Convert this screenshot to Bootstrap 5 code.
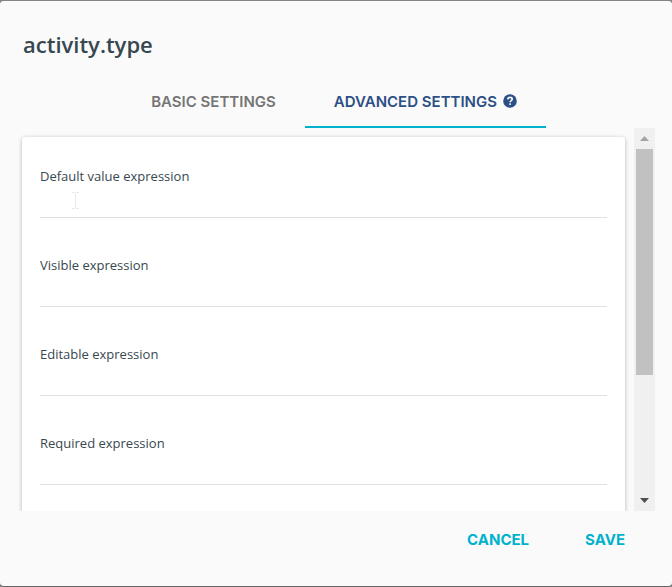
<!DOCTYPE html>
<html lang="en">
<head>
<meta charset="utf-8">
<meta name="viewport" content="width=device-width, initial-scale=1">
<title>activity.type</title>
<link href="https://cdn.jsdelivr.net/npm/bootstrap@5.3.0/dist/css/bootstrap.min.css" rel="stylesheet">
<style>
body { font-family: "Open Sans", "Liberation Sans", sans-serif; background: #858585; color: #37474f; }
.dialog-box { background: #fafafa; border: solid; border-width: 1px 0; border-color: #858585 transparent #666; border-radius: 4px; }
.dialog-title { font-size: 22px; line-height: 32px; font-weight: 600; padding: 27px 23px 0; }
.settings-tabs { padding: 15px 4px 0 0; }
.settings-tabs .nav-link { font-family: Inter, sans-serif; font-size: 15px; line-height: 24px; font-weight: 600; color: #757575; padding: 15px 29px 12px; border: 0; border-bottom: 2px solid transparent; border-radius: 0; background: none; }
.settings-tabs .nav-link.active { color: #2c4f85; border-color: #00b2cc; background: none; }
.help-icon { width: 14px; height: 14px; margin: -4px 0 0 2px; }
.scroll-area { min-height: 0; padding: 0 17px 0 22px; gap: 5px; }
.form-view { padding: 9px 4px 0; overflow: hidden; margin-left: -4px; }
.settings-card { border: 0; border-radius: 3px; box-shadow: 0 1px 4px rgba(0,0,0,.28); padding: 29px 18px; gap: 37px; }
.field-label { font-size: 13px; line-height: 20px; }
.line-input { height: 32px; border: 0; border-bottom: 1px solid #e0e0e0; border-radius: 0; padding: 0; background: transparent; box-shadow: none; }
.text-cursor { position: absolute; left: 32px; top: 26px; width: 7px; height: 17px; }
.scroll-track { width: 21px; background: #f0f0f0; padding: 0 2px; }
.scroll-track button { border: 0; padding: 0; background: none; height: 21px; line-height: 0; }
.scroll-track svg { width: 9px; height: 5px; }
.scroll-thumb { background: #c1c1c1; flex: 0 1 59%; }
.dialog-actions { padding: 10px 32px 27px; gap: 26px; }
.dialog-actions .btn { font-family: Inter, sans-serif; font-size: 15px; line-height: 24px; font-weight: 700; color: #00b2cc; padding: 7px 15px; border: 0; }
</style>
</head>
<body>
<div class="vh-100 d-flex flex-column">
<main class="dialog-box flex-fill d-flex flex-column overflow-hidden" role="dialog" aria-labelledby="title">
  <h1 class="dialog-title m-0" id="title">activity.type</h1>
  <div class="settings-tabs nav justify-content-center flex-nowrap" role="tablist">
    <button class="nav-link" type="button" role="tab">BASIC SETTINGS</button>
    <button class="nav-link active" type="button" role="tab" aria-selected="true">ADVANCED SETTINGS
      <svg class="help-icon" viewBox="0 0 14 14" aria-hidden="true"><circle cx="7" cy="7" r="6.8" fill="#2c4f85"/><path d="M4.8 5.3C5 3.9 5.8 3.4 7 3.4c1.300 0 2.200.8 2.200 1.800C9.200 6.600 7.100 6.700 7.100 8.300" fill="none" stroke="#fafafa" stroke-width="1.700"/><rect x="6.100" y="9.300" width="1.900" height="1.800" rx=".8" fill="#fafafa"/></svg>
    </button>
  </div>
  <div class="scroll-area d-flex flex-fill">
    <div class="form-view flex-fill">
      <form class="settings-card card">
        <div class="position-relative">
          <label class="field-label d-block" for="f1">Default value expression</label>
          <input class="line-input form-control" id="f1" type="text">
          <svg class="text-cursor" viewBox="0 0 7 17" aria-hidden="true"><path d="M0 .5h3M4 .5h3M3.500 1v15M0 16.500h3M4 16.500h3" stroke="#e9e9e9" fill="none"/></svg>
        </div>
        <div><label class="field-label d-block" for="f2">Visible expression</label><input class="line-input form-control" id="f2" type="text"></div>
        <div><label class="field-label d-block" for="f3">Editable expression</label><input class="line-input form-control" id="f3" type="text"></div>
        <div><label class="field-label d-block" for="f4">Required expression</label><input class="line-input form-control" id="f4" type="text"></div>
      </form>
    </div>
    <div class="scroll-track d-flex flex-column flex-shrink-0">
      <button type="button" aria-label="Scroll up"><svg viewBox="0 0 9 5"><path d="M0 5 4.500 0 9 5z" fill="#a3a3a3"/></svg></button>
      <div class="scroll-thumb"></div>
      <button class="mt-auto" type="button" aria-label="Scroll down"><svg viewBox="0 0 9 5"><path d="M0 0h9L4.500 5z" fill="#505050"/></svg></button>
    </div>
  </div>
  <div class="dialog-actions d-flex justify-content-end">
    <button class="btn" type="button">CANCEL</button>
    <button class="btn" type="button">SAVE</button>
  </div>
</main>
</div>
<script src="https://cdn.jsdelivr.net/npm/bootstrap@5.3.0/dist/js/bootstrap.bundle.min.js"></script>
</body>
</html>
